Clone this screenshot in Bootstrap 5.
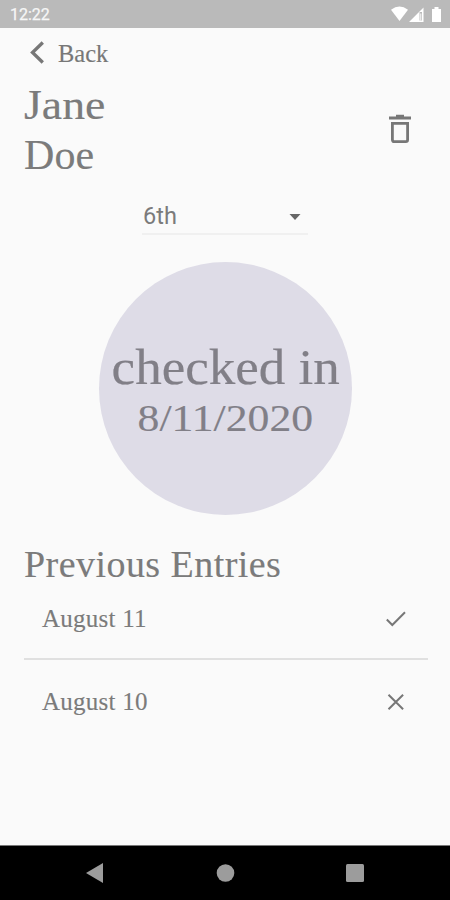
<!DOCTYPE html>
<html lang="en">
<head>
<meta charset="utf-8">
<meta name="viewport" content="width=device-width, initial-scale=1">
<title>Jane Doe</title>
<link href="https://cdn.jsdelivr.net/npm/bootstrap@5.3.0/dist/css/bootstrap.min.css" rel="stylesheet">
<style>
body{background:#fafafa;color:#7b7b7b;font-family:"Liberation Serif",serif;height:900px;overflow:hidden;-webkit-text-stroke:.15px currentColor}
svg{display:block;flex:none}
.status{height:28px;background:#bababa;color:#f6f6f6;font:400 16px/28px Roboto,sans-serif;padding:2px 7px 0 10px;-webkit-text-stroke:.25px currentColor}
.back{height:50px;padding-left:30px;font-size:24.5px;line-height:50px;color:#777;text-decoration:none}
.back span{margin:2px 0 0 12px}
.person{height:102px;padding:2px 38px 0 24px}
.person h1{font-size:42px;line-height:50.5px;font-weight:400}
.person svg{margin-top:-3px}
.first{transform:scaleX(1.09);transform-origin:left}
.last{letter-spacing:.1px}
.grade{width:166px;height:35px;margin:20px 0 0 142px;border-bottom:2px solid #f0f0f0;font:23.5px/34px Roboto,sans-serif;padding:0 7px 2px 1px;-webkit-text-stroke:0}
.grade svg{margin-top:2px}
.disc{width:253px;height:253px;margin:27px 0 0 99px;background:#dedce7;color:#817f87;border-radius:50%;white-space:nowrap}
.state{font-size:51px;line-height:56px;transform:scaleX(1.04);margin-top:3px;-webkit-text-stroke:.2px currentColor}
.date{font-size:37.5px;line-height:44px;transform:scaleX(1.165);margin-top:2px}
.entries{padding:27px 22px 0 24px}
.entries h2{font-size:38px;line-height:44px;letter-spacing:.45px;font-weight:400}
.entry{height:83px;padding:0 22px 0 18px;font-size:25px;letter-spacing:.25px}
.entry:first-child{height:74px;padding-bottom:7px;border-bottom:2px solid #e0e0e0}
.navkeys{height:55px;background:#000;border-top:1px solid #777}
</style>
</head>
<body class="d-flex flex-column m-0">
<header class="status d-flex justify-content-between align-items-center">
<span>12:22</span>
<svg width="52" height="18" viewBox="0 0 52 18" fill="#fff"><path d="M0 3.700Q8.500-2.500 17 3.700L8.500 15Z"/><path fill-rule="evenodd" d="M18 16 32.500 1.500V16ZM28.500 7.500v7H31V6h-2.500z"/><path d="M29.300 7.500h1v7h-1z"/><path d="M41 3h2.500V1h4v2H50V16H41Z"/></svg>
</header>
<main class="flex-grow-1">
<a href="#" class="back d-flex align-items-center"><svg width="16" height="24" viewBox="0 0 16 24" fill="none" stroke="#777" stroke-width="3.300"><path d="M12.800 1.500 2.500 11.500 12.800 21.500"/></svg><span>Back</span></a>
<section class="person d-flex justify-content-between align-items-center">
<h1 class="m-0"><span class="first d-inline-block">Jane</span><span class="last d-block">Doe</span></h1>
<svg width="24" height="30" viewBox="0 0 24 30"><path d="M1 4h22M8 2.200h8" fill="none" stroke="#777" stroke-width="2.800"/><path d="M4.400 9.400h15.200v16.400q0 1.800-1.800 1.800H6.200q-1.800 0-1.800-1.800Z" fill="none" stroke="#777" stroke-width="2.800"/></svg>
</section>
<div class="grade d-flex justify-content-between align-items-center"><span>6th</span><svg width="12" height="6" viewBox="0 0 12 6" fill="#666"><path d="M.5 0h11L6 6Z"/></svg></div>
<section class="disc d-flex flex-column align-items-center justify-content-center"><div class="state">checked in</div><div class="date">8/11/2020</div></section>
<section class="entries">
<h2 class="m-0">Previous Entries</h2>
<div>
<div class="entry d-flex justify-content-between align-items-center"><span>August 11</span><svg width="20" height="16" viewBox="0 0 20 16" fill="none" stroke="#777" stroke-width="2"><path d="M.8 8.500 6.300 14 19 1.300"/></svg></div>
<div class="entry d-flex justify-content-between align-items-center"><span>August 10</span><svg width="20" height="16" viewBox="0 0 20 16" fill="none" stroke="#777" stroke-width="2"><path d="m2.500.7 14.600 14.600M17.100.7 2.500 15.300"/></svg></div>
</div>
</section>
</main>
<footer class="navkeys"><svg width="450" height="54" viewBox="0 0 450 54" fill="#9c9c9c"><path d="M86 27 103 17v20Z"/><circle cx="225.500" cy="27" r="8.800"/><rect x="346" y="18" width="18" height="18" rx="1.500"/></svg></footer>
</body>
</html>
